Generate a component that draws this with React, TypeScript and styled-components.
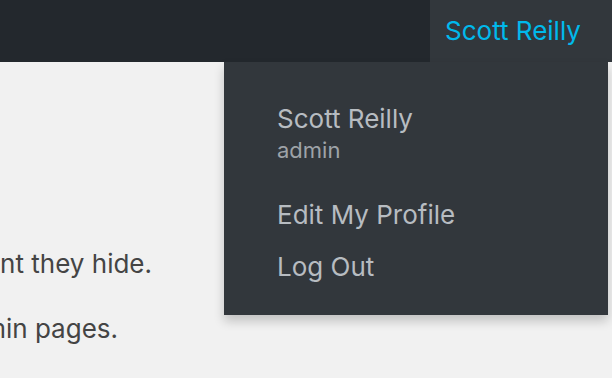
import { FC } from 'react';
import styled, { createGlobalStyle } from 'styled-components';

const GlobalStyle = createGlobalStyle`
  html, body {
    margin: 0;
    padding: 0;
    background: #f1f1f1;
  }

  body {
    font-family: Inter, 'Noto Sans', 'Liberation Sans', sans-serif;
    overflow: hidden;
  }
`;

const App: FC = () => (
  <Page>
    <GlobalStyle />
    <AdminBar>
      <AccountItem>
        <AccountLink href="#">Scott Reilly</AccountLink>
        <Dropdown>
          <Identity>
            <DisplayName>Scott Reilly</DisplayName>
            <Username>admin</Username>
          </Identity>
          <MenuLink href="#">Edit My Profile</MenuLink>
          <MenuLink href="#">Log Out</MenuLink>
        </Dropdown>
      </AccountItem>
    </AdminBar>
    <Content>
      {/* lines run off the left edge, so each is pinned by where it ends */}
      <Paragraph $lineEnd={152}>content they hide.</Paragraph>
      <Paragraph $lineEnd={118}>admin pages.</Paragraph>
    </Content>
  </Page>
);

export default App;

const Page = styled.div`
  width: 612px;
  height: 378px;
  position: relative;
  overflow: hidden;
`;

const AdminBar = styled.header`
  display: flex;
  justify-content: flex-end;
  height: 62px;
  background: #23282d;
`;

const AccountItem = styled.div`
  position: relative;
  display: flex;
  align-items: center;
  width: 182px;
  padding-left: 15px;
  box-sizing: border-box;
  background: #32373c;
`;

const AccountLink = styled.a`
  color: #00b9eb;
  font-size: 26px;
  line-height: 62px;
  text-decoration: none;
`;

const Dropdown = styled.nav`
  position: absolute;
  top: 62px;
  right: 4px;
  width: 384px;
  padding: 39px 0 22px 53px;
  box-sizing: border-box;
  display: flex;
  flex-direction: column;
  background: #32373c;
  box-shadow: 0 6px 10px rgba(0, 0, 0, 0.2);
`;

const Identity = styled.div`
  display: flex;
  flex-direction: column;
  margin-bottom: 26px;
`;

const DisplayName = styled.span`
  color: #b7bcc1;
  font-size: 26px;
  line-height: 36px;
`;

const Username = styled.span`
  color: #9ea3a8;
  font-size: 22px;
  line-height: 26px;
`;

const MenuLink = styled.a`
  color: #b7bcc1;
  font-size: 26px;
  line-height: 52px;
  text-decoration: none;
`;

const Content = styled.main`
  padding-top: 182px;
`;

const Paragraph = styled.p<{ $lineEnd: number }>`
  display: flex;
  justify-content: flex-end;
  width: ${({ $lineEnd }) => $lineEnd}px;
  margin: 0 0 26px;
  color: #444;
  font-size: 26px;
  line-height: 39px;
  white-space: nowrap;
`;
